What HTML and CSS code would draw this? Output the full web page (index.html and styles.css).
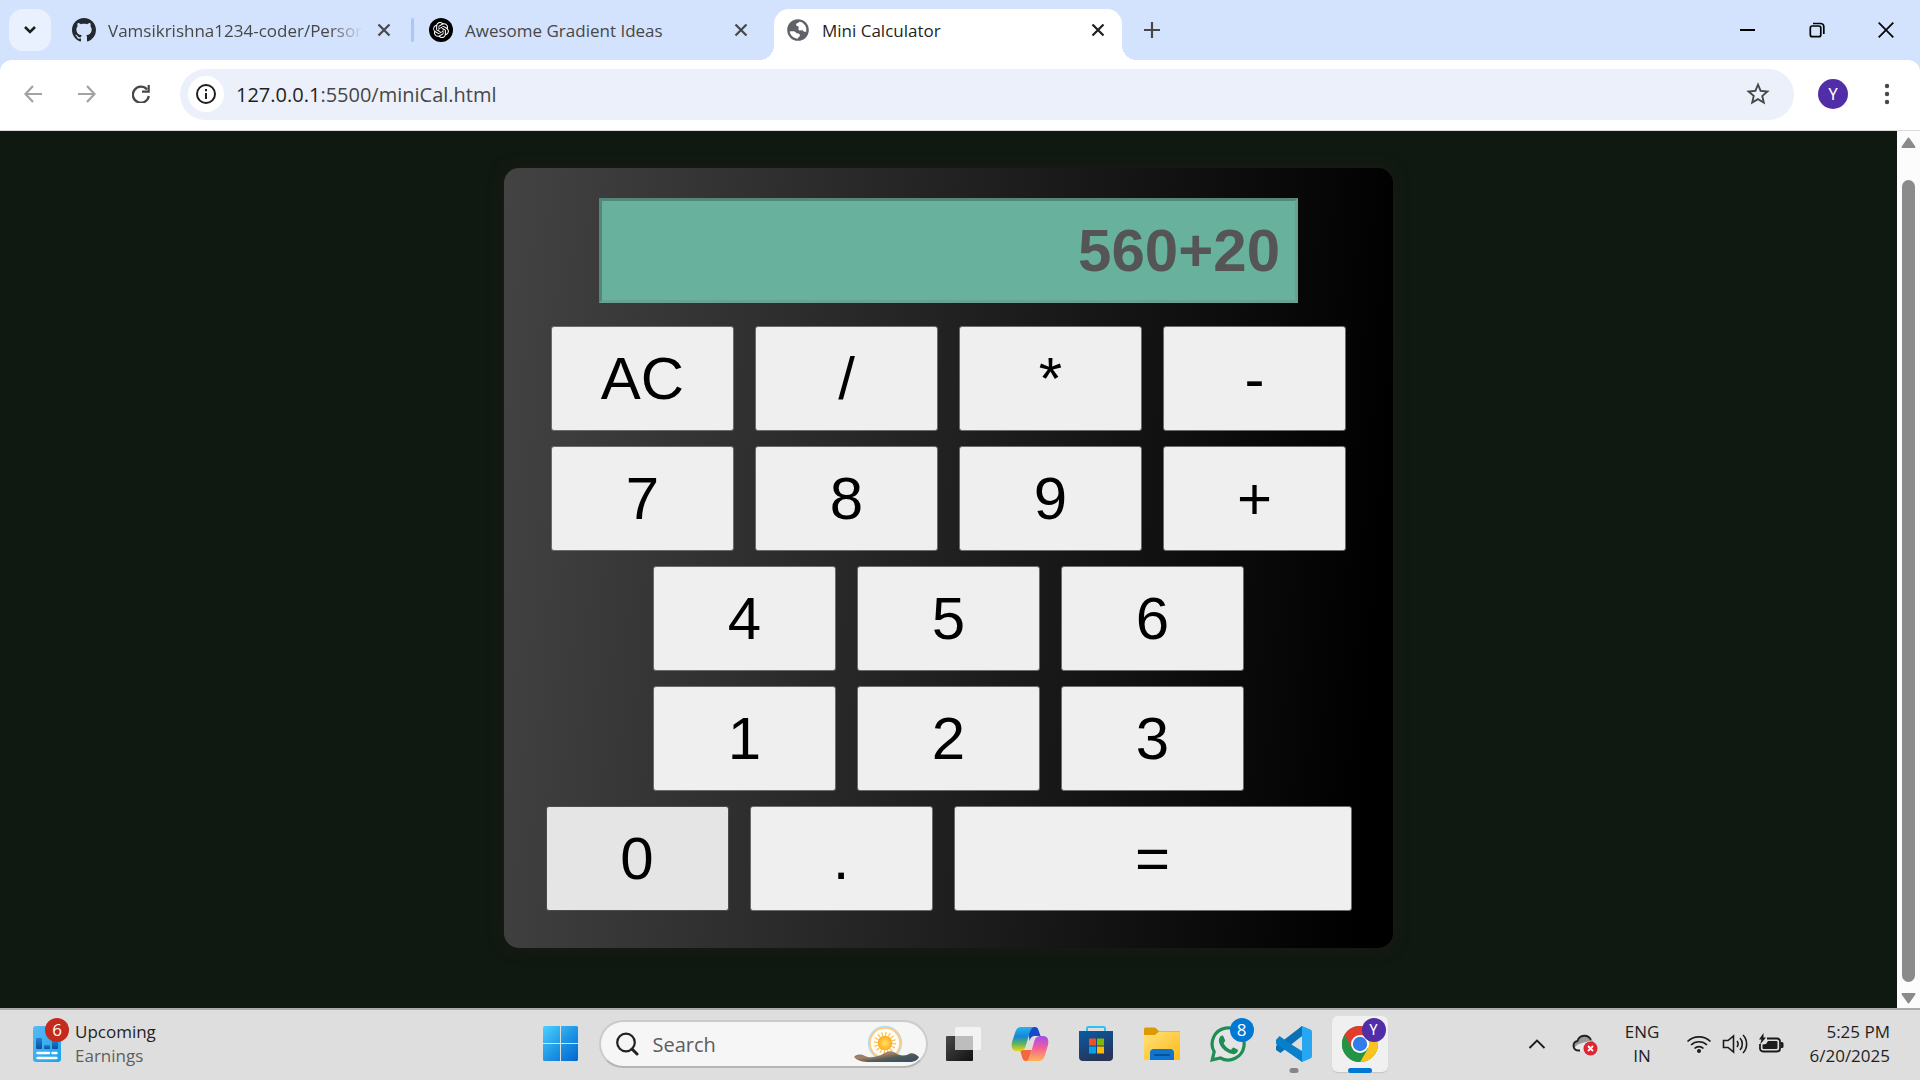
FILE: index.html
```html
<!DOCTYPE html>
<html lang="en">
<head>
<meta charset="utf-8">
<title>Mini Calculator</title>
<meta name="viewport" content="width=device-width, initial-scale=1">
<link rel="stylesheet" href="styles.css">
</head>
<body>
<header class="tab-strip">
  <button class="tab-search" aria-label="Search tabs"><svg width="18" height="18" viewBox="0 0 18 18"><path d="M4 6l5 5 5-5" fill="none" stroke="#1f1f1f" stroke-width="2.6"/></svg></button>
  <nav class="tabs" aria-label="Open tabs">
    <div class="tab">
      <svg class="favicon" viewBox="0 0 16 16"><path fill="#24292f" d="M8 0C3.58 0 0 3.58 0 8c0 3.54 2.29 6.53 5.47 7.59.4.07.55-.17.55-.38 0-.19-.01-.82-.01-1.49-2.01.37-2.53-.49-2.69-.94-.09-.23-.48-.94-.82-1.13-.28-.15-.68-.52-.01-.53.63-.01 1.08.58 1.23.82.72 1.21 1.87.87 2.33.66.07-.52.28-.87.51-1.07-1.78-.2-3.64-.89-3.64-3.95 0-.87.31-1.59.82-2.15-.08-.2-.36-1.02.08-2.12 0 0 .67-.21 2.2.82.64-.18 1.32-.27 2-.27s1.36.09 2 .27c1.53-1.04 2.2-.82 2.2-.82.44 1.1.16 1.92.08 2.12.51.56.82 1.27.82 2.15 0 3.07-1.87 3.75-3.65 3.95.29.25.54.73.54 1.48 0 1.07-.01 1.93-.01 2.2 0 .21.15.46.55.38A8.01 8.01 0 0 0 16 8c0-4.42-3.58-8-8-8z"/></svg>
      <a class="tab-title faded" href="#">Vamsikrishna1234-coder/Person</a>
      <button class="tab-close" aria-label="Close tab"><svg width="14" height="14" viewBox="0 0 14 14"><path d="M1.5 1.5l11 11m0-11l-11 11" stroke="currentColor" stroke-width="2.2"/></svg></button>
    </div>
    <span class="separator"></span>
    <div class="tab">
      <svg class="favicon" viewBox="0 0 24 24"><circle cx="12" cy="12" r="12"/><path transform="translate(4 4) scale(.667)" fill="#fff" d="M22.282 9.821a5.985 5.985 0 0 0-.516-4.91 6.046 6.046 0 0 0-6.51-2.9A6.065 6.065 0 0 0 4.981 4.18a5.985 5.985 0 0 0-3.998 2.9 6.046 6.046 0 0 0 .743 7.097 5.98 5.98 0 0 0 .51 4.911 6.051 6.051 0 0 0 6.515 2.9A5.985 5.985 0 0 0 13.26 24a6.056 6.056 0 0 0 5.772-4.206 5.99 5.99 0 0 0 3.997-2.9 6.056 6.056 0 0 0-.747-7.073zM13.26 22.43a4.476 4.476 0 0 1-2.876-1.04l.141-.081 4.779-2.758a.795.795 0 0 0 .392-.681v-6.737l2.02 1.168a.071.071 0 0 1 .038.052v5.583a4.504 4.504 0 0 1-4.494 4.494zM3.6 18.304a4.47 4.47 0 0 1-.535-3.014l.142.085 4.783 2.759a.771.771 0 0 0 .78 0l5.843-3.369v2.332a.08.08 0 0 1-.033.062L9.74 19.95a4.5 4.5 0 0 1-6.14-1.646zM2.34 7.896a4.485 4.485 0 0 1 2.366-1.973V11.6a.766.766 0 0 0 .388.676l5.815 3.355-2.02 1.168a.076.076 0 0 1-.071 0l-4.83-2.786A4.504 4.504 0 0 1 2.34 7.872zm16.597 3.855l-5.833-3.387L15.119 7.2a.076.076 0 0 1 .071 0l4.83 2.791a4.494 4.494 0 0 1-.676 8.105v-5.678a.79.79 0 0 0-.407-.667zm2.01-3.023l-.141-.085-4.774-2.782a.776.776 0 0 0-.785 0L9.409 9.23V6.897a.066.066 0 0 1 .028-.061l4.83-2.787a4.5 4.5 0 0 1 6.68 4.66zm-12.64 4.135l-2.02-1.164a.08.08 0 0 1-.038-.057V6.075a4.5 4.5 0 0 1 7.375-3.453l-.142.08L8.704 5.46a.795.795 0 0 0-.393.681zm1.097-2.365l2.602-1.5 2.607 1.5v2.999l-2.597 1.5-2.607-1.5z"/></svg>
      <a class="tab-title" href="#">Awesome Gradient Ideas</a>
      <button class="tab-close" aria-label="Close tab"><svg width="14" height="14" viewBox="0 0 14 14"><path d="M1.5 1.5l11 11m0-11l-11 11" stroke="currentColor" stroke-width="2.2"/></svg></button>
    </div>
    <span class="separator hidden"></span>
    <div class="tab active">
      <svg class="favicon" viewBox="0 0 24 24"><path fill="#5f6368" fill-rule="evenodd" d="M12 1.2a10.8 10.8 0 1 0 0 21.600 10.800 10.800 0 0 0 0-21.600zM3.700 13.500c3.200-.4 5.300-.2 6.500 1.300 1 1.300 3.800.3 3.800 2.600 0 1-1.900 1.300-2 3.200C7.600 20.500 4.300 17.500 3.700 13.500zM13.500 3.600c-.3 1.600-3.400 1.300-3.400 3.100 0 1.500 1.800.9 2.400 1.900.8 1.300-.7 2.400.2 3.300 1.300 1.300 3.500-.3 4.500 1 .7.900 1.800 1.100 3.100.8a8.500 8.500 0 0 0-6.800-10.100z"/></svg>
      <a class="tab-title" href="#" aria-current="page">Mini Calculator</a>
      <button class="tab-close" aria-label="Close tab"><svg width="14" height="14" viewBox="0 0 14 14"><path d="M1.500 1.500l11 11m0-11l-11 11" stroke="currentColor" stroke-width="2.2"/></svg></button>
    </div>
  </nav>
  <button class="new-tab" aria-label="New tab"><svg width="16" height="16" viewBox="0 0 16 16"><path d="M8 0v16M0 8h16" stroke="#474747" stroke-width="2.2"/></svg></button>
  <div class="window-controls">
    <button aria-label="Minimize"><svg width="16" height="16" viewBox="0 0 16 16"><path d="M0 8h15" stroke="#000" stroke-width="2"/></svg></button>
    <button aria-label="Restore"><svg width="16" height="16" viewBox="0 0 16 16" fill="none" stroke="#000" stroke-width="1.700"><rect x="1.300" y="4" width="10.500" height="10.700" rx="2"/><path d="M4 1.500h7.500a3.300 3.300 0 0 1 3.300 3.300V12"/></svg></button>
    <button aria-label="Close"><svg width="16" height="16" viewBox="0 0 16 16"><path d="M.7.700l14.600 14.600m0-14.600L.7 15.300" stroke="#000" stroke-width="1.700"/></svg></button>
  </div>
</header>

<div class="toolbar-back">
<div class="toolbar">
  <div class="nav-buttons">
    <button aria-label="Back"><svg width="18" height="18" viewBox="0 0 18 18"><path d="M18 9H1.500M9 1L1.500 9 9 17" fill="none" stroke="#a3a3a3" stroke-width="2.200"/></svg></button>
    <button aria-label="Forward"><svg width="18" height="18" viewBox="0 0 18 18"><path d="M0 9h16.500M9 1l7.500 8L9 17" fill="none" stroke="#a3a3a3" stroke-width="2.200"/></svg></button>
    <button aria-label="Reload"><svg width="18" height="18" viewBox="0 0 18 18"><path d="M15 4.500A8 8 0 1 0 16.800 11" fill="none" stroke="#474747" stroke-width="2.300"/><path d="M17.800 0v7.700H10V5.500h5.600V0z" fill="#474747"/></svg></button>
  </div>
  <div class="omnibox">
    <button class="site-info" aria-label="Site information"><svg width="20" height="20" viewBox="0 0 20 20"><circle cx="10" cy="10" r="9" fill="none" stroke="#1f1f1f" stroke-width="2"/><path d="M10 9v6M10 5v2.200" stroke="#1f1f1f" stroke-width="2"/></svg></button>
    <div class="url"><span class="host">127.0.0.1</span>:5500/miniCal.html</div>
    <button class="bookmark" aria-label="Bookmark this tab"><svg width="28" height="28" viewBox="0 0 24 24"><path fill="#474747" d="M22 9.240l-7.190-.62L12 2 9.190 8.630 2 9.240l5.460 4.730L5.820 21 12 17.270 18.180 21l-1.630-7.030L22 9.240zM12 15.400l-3.760 2.270 1-4.280-3.320-2.880 4.380-.38L12 6.100l1.710 4.040 4.380.38-3.320 2.880 1 4.280L12 15.400z"/></svg></button>
  </div>
  <button class="profile" aria-label="Profile">Y</button>
  <button class="menu" aria-label="Menu"><svg width="6" height="22" viewBox="0 0 6 22" fill="#474747"><circle cx="3" cy="3" r="2.200"/><circle cx="3" cy="11" r="2.200"/><circle cx="3" cy="19" r="2.200"/></svg></button>
</div>
</div>

<div class="viewport">
  <main class="page">
    <form class="calculator">
      <input class="display" type="text" value="560+20" aria-label="Result" readonly>
      <div class="keys">
        <div class="row"><button type="button">AC</button><button type="button">/</button><button type="button">*</button><button type="button">-</button></div>
        <div class="row"><button type="button">7</button><button type="button">8</button><button type="button">9</button><button type="button">+</button></div>
        <div class="row"><button type="button">4</button><button type="button">5</button><button type="button">6</button></div>
        <div class="row"><button type="button">1</button><button type="button">2</button><button type="button">3</button></div>
        <div class="row"><button type="button" class="hovered">0</button><button type="button">.</button><button type="button" class="equals">=</button></div>
      </div>
    </form>
  </main>
  <div class="scrollbar">
    <svg width="15" height="12" viewBox="0 0 15 12"><path d="M7.500 1.500L13.500 10H1.500z" fill="#8b8b8b" stroke="#8b8b8b" stroke-width="2" stroke-linejoin="round"/></svg>
    <div class="track"><div class="thumb"></div></div>
    <svg width="15" height="12" viewBox="0 0 15 12"><path d="M7.500 10.500L1.500 2h12z" fill="#8b8b8b" stroke="#8b8b8b" stroke-width="2" stroke-linejoin="round"/></svg>
  </div>
</div>

<footer class="taskbar">
  <button class="widget">
    <span class="widget-icon">
      <svg width="28" height="36" viewBox="0 0 28 36"><defs><linearGradient id="wd" x2="1" y2="1"><stop stop-color="#5db8f3"/><stop offset="1" stop-color="#18a3ec"/></linearGradient><linearGradient id="wb" x2="0" y2="1"><stop stop-color="#1f82d6"/><stop offset="1" stop-color="#0b4f9e"/></linearGradient></defs><rect width="28" height="36" rx="3" fill="url(#wd)"/><rect x="3" y="12" width="6" height="11" rx="1" fill="url(#wb)"/><rect x="11" y="19" width="6" height="4" rx="1" fill="url(#wb)"/><rect x="19" y="14" width="6" height="9" rx="1" fill="url(#wb)"/><path d="M4.500 27h11.500M19.500 27h4M4.500 32h19" stroke="#fff" stroke-width="2.400" stroke-linecap="round"/></svg>
      <span class="badge red">6</span>
    </span>
    <span class="widget-text"><span>Upcoming</span><span class="muted">Earnings</span></span>
  </button>

  <div class="apps">
    <button aria-label="Start"><svg width="36" height="36" viewBox="0 0 36 36"><defs><linearGradient id="win" x2="1" y2="1"><stop stop-color="#4cd0ff"/><stop offset=".5" stop-color="#2098e5"/><stop offset="1" stop-color="#0067d0"/></linearGradient></defs><path fill="url(#win)" d="M1.500 0H17v17H0V1.500A1.500 1.500 0 0 1 1.500 0zM18 0h15.500A1.500 1.500 0 0 1 35 1.500V17H18zM0 18h17v17H1.500A1.500 1.500 0 0 1 0 33.500zM18 18h17v15.500a1.500 1.500 0 0 1-1.500 1.500H18z"/></svg></button>
    <label class="search">
      <svg width="24" height="24" viewBox="0 0 24 24" fill="none" stroke="#222"><circle cx="11" cy="10.500" r="8.800" stroke-width="2.200"/><path d="M17 17l5 5" stroke-width="3" stroke-linecap="round"/></svg>
      <input type="text" placeholder="Search" aria-label="Search">
      <svg class="sun" width="66" height="40" viewBox="0 0 66 40"><defs><radialGradient id="sun"><stop stop-color="#ffe069"/><stop offset="1" stop-color="#ffac1c"/></radialGradient><linearGradient id="hill" x2="1" y2="1"><stop stop-color="#776b5e"/><stop offset=".35" stop-color="#a98266"/><stop offset=".6" stop-color="#515b58"/><stop offset="1" stop-color="#304a63"/></linearGradient></defs><circle cx="31" cy="19" r="16.500" fill="#fffdf6" stroke="#b7e1ef" stroke-width="1.500"/><circle cx="31" cy="19" r="15.200" fill="none" stroke="#ffc680" stroke-width="1.800"/><circle cx="31" cy="19" r="9" fill="none" stroke="#ffc04f" stroke-width="4" stroke-dasharray="1.200 2.330"/><circle cx="31" cy="19" r="7.300" fill="url(#sun)"/><path fill="url(#hill)" d="M0 33c3-3 7-3 11-1 6 3 11 0 16-1 5-3 9-5 13-3 4 3 8 4 13 3 4-3 8-2 12 2-1 3-5 5-10 5H16C9 38 3 37 0 33z"/></svg>
    </label>
    <button aria-label="Task view"><svg width="36" height="36" viewBox="0 0 36 36"><defs><linearGradient id="tv" x2="1" y2="1"><stop stop-color="#494949"/><stop offset="1" stop-color="#111"/></linearGradient></defs><rect y="10" width="27" height="25" rx="1" fill="url(#tv)"/><rect x="9" y="1" width="26" height="23" rx="1" fill="#f3f3f3"/><path d="M9 10h17a1 1 0 0 1 1 1v13H9z" fill="#bdbdbd"/></svg></button>
    <button aria-label="Copilot"><svg width="38" height="34" viewBox="0 0 38 34"><defs><linearGradient id="c1" x2="0" y2="1"><stop stop-color="#23b5ef"/><stop offset=".4" stop-color="#1586d8"/><stop offset=".7" stop-color="#5eb75a"/><stop offset="1" stop-color="#f1d21a"/></linearGradient><linearGradient id="c2" x2="0" y2="1"><stop stop-color="#a34bf0"/><stop offset=".45" stop-color="#f15c9c"/><stop offset="1" stop-color="#ffb453"/></linearGradient></defs><path d="M17 0h7c3 0 3.500 3 4.500 6l1 3h-5c-4 0-5 2-6 5z" fill="#1948c9"/><path d="M9 23h12l-4 11h-1c-4 0-4.500-2-5.500-6z" fill="#f5683c"/><path d="M10 0h13c-3 1-4 4-5 8l-3 10c-1 4-3 6-7 6H6c-5 0-6-4-5-9L4 6c1-4 3-6 6-6z" fill="url(#c1)"/><path d="M28 34H15c3-1 4-4 5-8l3-11c1-4 3-6 7-6h2c5 0 6 4 5 9l-3 10c-1 4-3 6-6 6z" fill="url(#c2)"/></svg></button>
    <button aria-label="Microsoft Store"><svg width="36" height="36" viewBox="0 0 36 36"><defs><linearGradient id="st" x2=".4" y2="1"><stop stop-color="#075ca6"/><stop offset="1" stop-color="#263558"/></linearGradient></defs><path d="M9 7V2.500A1.500 1.500 0 0 1 10.500 1h15A1.500 1.500 0 0 1 27 2.500V7" fill="none" stroke="#2fc1ef" stroke-width="2"/><path d="M1 5h34v26a4 4 0 0 1-4 4H5a4 4 0 0 1-4-4z" fill="url(#st)"/><path fill="#f25022" d="M11 12.500h7v7h-7z"/><path fill="#7fba00" d="M19 12.500h7v7h-7z"/><path fill="#00a4ef" d="M11 20.500h7v7h-7z"/><path fill="#ffb900" d="M19 20.500h7v7h-7z"/></svg></button>
    <button aria-label="File Explorer"><svg width="36" height="34" viewBox="0 0 36 34"><defs><linearGradient id="fo" x2="1" y2="1"><stop stop-color="#ffe07a"/><stop offset="1" stop-color="#fdbb19"/></linearGradient></defs><path d="M0 2a1.500 1.500 0 0 1 1.500-1.500H11l4 3.500h19.500A1.500 1.500 0 0 1 36 5.500V15H0z" fill="#dc9a05"/><path d="M0 8h11l4-3.500h19.500A1.500 1.500 0 0 1 36 6v25.500a1.500 1.500 0 0 1-1.500 1.500h-33A1.500 1.500 0 0 1 0 31.500z" fill="url(#fo)"/><path d="M6 33v-7a4 4 0 0 1 4-4h16a4 4 0 0 1 4 4v7z" fill="#0f74ce"/><path d="M11 28h14" stroke="#084f96" stroke-width="1.800" stroke-linecap="round"/></svg></button>
    <button aria-label="WhatsApp"><span class="app-icon"><svg width="36" height="36" viewBox="0 0 36 36"><path d="M2.200 33.800l2-8A16 16 0 1 1 10.500 32z" fill="#e4e4e4" stroke="#1f8e56" stroke-width="3.200"/><path d="M12 9.500c.7 0 1.100.1 1.500 1l1.700 4c.2.700-1.600 2.300-1.500 3 1.500 3 4 5 7 6.200.9.200 2-2.400 2.900-2.200l3.800 1.900c.6.300.6.700.5 1.400-.4 2.100-2.700 3.400-4.600 3.400-2 0-6.500-1.600-9.400-4.400-2.900-2.700-5-6.300-5-8.800 0-2.700 1.300-5.200 3.100-5.500z" fill="#1f8e56"/></svg><span class="badge blue">8</span></span></button>
    <button class="running" aria-label="Visual Studio Code"><svg width="36" height="36" viewBox="0 0 36 36"><path d="M26 0L9 16.500 3.500 12 0 14v3l26 19V25L13 17 26 10z" fill="#0a87d3"/><path d="M26 0v10L4.500 27 0 24v-4z" fill="#0971b4"/><path d="M0 14l3.500-4L27 27v9L0 18z" fill="#087fc9"/><path d="M26 0l8 3.200c1.400.6 2 1.500 2 2.800v24c0 1.300-.6 2.200-2 2.800L26 36z" fill="#27a7f1"/></svg></button>
    <button class="running focused" aria-label="Google Chrome"><span class="app-icon"><svg width="36" height="36" viewBox="0 0 36 36"><circle cx="18" cy="18" r="18" fill="#229342"/><path d="M18 18L2.400 9A18 18 0 0 1 33.600 9z" fill="#e33b2e"/><path d="M18 9h15.600A18 18 0 0 1 18 36l7.800-13.500z" fill="#fcc31e"/><path d="M2.400 9l7.800 13.500L18 9z" fill="#e33b2e"/><path d="M2.400 9A18 18 0 0 0 18 36l7.800-13.500H10.200z" fill="#249444"/><circle cx="18" cy="18" r="9" fill="#fff"/><circle cx="18" cy="18" r="7.200" fill="#347de8"/></svg><span class="badge purple">Y</span></span></button>
  </div>

  <div class="tray">
    <button aria-label="Show hidden icons"><svg width="18" height="12" viewBox="0 0 18 12"><path d="M1.500 10L9 2.500l7.500 7.500" fill="none" stroke="#1b1b1b" stroke-width="1.900"/></svg></button>
    <button class="cloud" aria-label="OneDrive"><svg width="26" height="24" viewBox="0 0 26 24"><path d="M5.500 18.500A4.700 4.700 0 0 1 5 9a7.500 7.500 0 0 1 14-1c4 1 5 7 2 9.500z" fill="#9a9a9a"/><path d="M2.500 16c3-5 9-5 15-7l4 3-3 7H6z" fill="#e8e8e8"/><path d="M8 18.500H6A4.800 4.800 0 0 1 5.500 9a7.200 7.200 0 0 1 13.500-1" fill="none" stroke="#202020" stroke-width="1.800"/><circle cx="18.500" cy="16.500" r="7" fill="#e02432"/><path d="M16 14l5 5m0-5l-5 5" stroke="#fff" stroke-width="1.900"/></svg></button>
    <button class="language"><span>ENG</span><span>IN</span></button>
    <button class="status" aria-label="Network, volume and battery">
      <svg width="26" height="20" viewBox="0 0 26 20" fill="none" stroke="#1b1b1b" stroke-width="1.700"><path d="M1.500 7.500a16.500 16.500 0 0 1 23 0M5 11a11.500 11.500 0 0 1 16 0M8.500 14.500a6.500 6.500 0 0 1 9 0"/><circle cx="13" cy="17" r="2" fill="#1b1b1b" stroke="none"/></svg>
      <svg width="26" height="22" viewBox="0 0 26 22" fill="none" stroke="#1b1b1b" stroke-width="1.600"><path d="M1.500 7.500H6L11.500 3v16L6 14.500H1.500zM15 8a5 5 0 0 1 0 6M18 5a9 9 0 0 1 0 12M21 2a13 13 0 0 1 0 18"/></svg>
      <svg width="26" height="22" viewBox="0 0 26 22"><path d="M9 5.500h10a3 3 0 0 1 3 3v7a3 3 0 0 1-3 3H5a3 3 0 0 1-3-3V11" fill="none" stroke="#1b1b1b" stroke-width="1.800"/><path d="M10 8h8.500a1 1 0 0 1 1 1v6a1 1 0 0 1-1 1h-13a1 1 0 0 1-1-1v-3.500L8 11z" fill="#1b1b1b"/><path d="M23 9h1a1.500 1.500 0 0 1 1.500 1.500v3A1.500 1.500 0 0 1 24 15h-1zM5.500 0L1 6.500h2.500L2 11.500l6-7H5.500z" fill="#1b1b1b"/></svg>
    </button>
    <button class="clock"><span>5:25 PM</span><span>6/20/2025</span></button>
  </div>
</footer>
</body>
</html>
```
FILE: styles.css
```css
* { box-sizing: border-box; }

body {
  margin: 0;
  height: 100vh;
  display: flex;
  flex-direction: column;
  overflow: hidden;
  font-family: "Open Sans", "Noto Sans", sans-serif;
  font-size: 17px;
  color: #1f1f1f;
}

button, input { font: inherit; color: inherit; }

button {
  display: flex;
  align-items: center;
  justify-content: center;
  padding: 0;
  border: 0;
  background: none;
}

a { color: inherit; text-decoration: none; }
svg { display: block; flex: none; }

/* Tab strip */
.tab-strip {
  display: flex;
  flex: none;
  height: 60px;
  padding: 9px 0 0 9px;
  background: #d3e3fd;
}

.tab-search {
  width: 42px;
  height: 42px;
  margin-right: 9px;
  border-radius: 14px;
  background: #e9f1fe;
}

.tabs { display: flex; }

.tab {
  position: relative;
  display: flex;
  align-items: center;
  width: 348px;
  height: 51px;
  padding: 0 12px 9px;
  color: #474747;
}

.favicon { width: 24px; height: 24px; }

.tab-title {
  flex: 1;
  margin: 1px 0 0 12px;
  white-space: nowrap;
}

.faded {
  -webkit-mask-image: linear-gradient(to right, #000 85%, transparent 98%);
  mask-image: linear-gradient(to right, #000 85%, transparent 98%);
}

.tab-close { width: 24px; height: 24px; margin-left: 4px; }

.separator {
  width: 3px;
  height: 24px;
  margin: 9px 3px;
  border-radius: 2px;
  background: #a8c7fa;
}

.separator.hidden { visibility: hidden; }

.active {
  border-radius: 15px 15px 0 0;
  background: #fff;
  color: #1f1f1f;
}

.active::before, .active::after {
  content: "";
  position: absolute;
  bottom: 0;
  width: 15px;
  height: 15px;
}

.active::before {
  right: 100%;
  background: radial-gradient(circle at 0 0, transparent 15px, #fff 15px);
}

.active::after {
  left: 100%;
  background: radial-gradient(circle at 100% 0, transparent 15px, #fff 15px);
}

.new-tab { width: 42px; height: 42px; margin-left: 9px; }

.window-controls { display: flex; height: 42px; margin-left: auto; }
.window-controls button { width: 69px; }

/* Toolbar */
.toolbar-back { flex: none; background: #d3e3fd; }

.toolbar {
  display: flex;
  align-items: center;
  height: 71px;
  padding: 0 12px 2px 6px;
  border-bottom: 1px solid #dcdcdc;
  border-radius: 12px 12px 0 0;
  background: #fff;
}

.nav-buttons { display: flex; margin-right: 12px; }
.nav-buttons button { width: 54px; height: 42px; }

.omnibox {
  display: flex;
  flex: 1;
  align-items: center;
  height: 51px;
  padding: 0 18px 0 8px;
  border-radius: 26px;
  background: #ebf0fa;
}

.site-info { width: 36px; height: 36px; border-radius: 50%; background: #fff; }
.url { flex: 1; margin-left: 12px; font-size: 20px; color: #474747; }
.host { color: #1f1f1f; }
.bookmark { width: 36px; height: 36px; }

.profile {
  width: 30px;
  height: 30px;
  margin-left: 24px;
  border-radius: 50%;
  background: #512da8;
  color: #fff;
  font-family: Roboto, sans-serif;
  font-size: 16px;
}

.menu { width: 42px; height: 42px; margin-left: 18px; }

/* Page */
.viewport { display: flex; flex: 1; min-height: 0; }

.page {
  flex: 1;
  padding-top: 37px;
  overflow: hidden;
  background: #101911;
}

.calculator {
  display: flex;
  flex-direction: column;
  align-items: center;
  gap: 23px;
  width: 889px;
  max-width: 100%;
  margin: 0 auto;
  padding: 30px 36px 37px;
  border-radius: 15px;
  background: linear-gradient(94deg, #434343, #000 96%);
  box-shadow: 0 0 15px #1b1b13;
}

.display {
  width: 699px;
  max-width: 100%;
  height: 105px;
  padding: 0 15px;
  border: 3px solid;
  border-color: #53877a #68a291 #68a291 #53877a;
  outline: 0;
  background: #68b29d;
  color: #555;
  font: bold 60px "Liberation Sans", Arial, sans-serif;
  text-align: right;
}

.keys { display: flex; flex-direction: column; gap: 15px; }
.row { display: flex; justify-content: center; gap: 21px; }

.row button {
  width: 183px;
  height: 105px;
  border: 1px solid #6b6b6b;
  border-radius: 3px;
  background: #efefef;
  color: #000;
  font: 60px "Liberation Sans", Arial, sans-serif;
}

.row .hovered { border-color: #4c4c4c; background: #e5e5e5; }
.row .equals { width: 398px; }

.row:last-child { margin: 0 -6px; }

.scrollbar {
  display: flex;
  flex-direction: column;
  align-items: center;
  width: 23px;
  padding: 6px 0 4px;
  background: #fcfcfc;
}

.track { flex: 1; padding: 31px 0 10px; }
.thumb { width: 13px; height: 100%; border-radius: 7px; background: #8b8b8b; }

/* Taskbar */
.taskbar {
  display: grid;
  grid-template-columns: 1fr auto 1fr;
  flex: none;
  height: 72px;
  padding-bottom: 2px;
  border-top: 2px solid #ababab;
  background: #dedede;
}

.widget { justify-self: start; gap: 14px; padding-left: 33px; text-align: left; line-height: 24px; }
.widget-icon, .app-icon { position: relative; }
.widget-text { display: flex; flex-direction: column; }
.muted { color: #5f5f5f; }

.badge {
  position: absolute;
  top: -8px;
  right: -8px;
  width: 24px;
  height: 24px;
  border-radius: 50%;
  color: #fff;
  font-size: 17px;
  line-height: 24px;
  text-align: center;
}

.red { background: #c42b1c; }
.blue { background: #0078d4; }
.purple { background: #512da8; font-family: Roboto, sans-serif; font-size: 14px; }

.apps { display: flex; align-items: center; }
.apps > button { position: relative; width: 66px; height: 56px; }

.search {
  display: flex;
  align-items: center;
  width: 329px;
  height: 48px;
  margin: 0 3px 0 5px;
  padding: 0 6px 0 14px;
  border: 2px solid #cbcbcb;
  border-bottom-color: #b5b5b5;
  border-radius: 24px;
  background: #f6f6f6;
}

.search input {
  flex: 1;
  min-width: 0;
  margin-left: 14px;
  padding: 0;
  border: 0;
  outline: 0;
  background: none;
  font-size: 20px;
}

.search input::placeholder { color: #5c5c5c; opacity: 1; }

.running::after {
  content: "";
  position: absolute;
  bottom: -1px;
  left: 50%;
  width: 9px;
  height: 5px;
  border-radius: 3px;
  background: #858585;
  transform: translateX(-50%);
}

.apps > .focused {
  width: 56px;
  margin: 0 5px;
  border-radius: 6px;
  background: #f0f0f0;
  box-shadow: 0 1px 1px #c4c4c4;
}

.focused::after { width: 24px; background: #0078d4; }

.tray { display: flex; justify-self: end; align-items: center; padding-right: 30px; line-height: 24px; }
.cloud { margin-left: 26px; }
.language { flex-direction: column; width: 36px; margin-left: 26px; }
.status { gap: 10px; margin-left: 26px; }
.clock { flex-direction: column; align-items: flex-end; width: 84px; margin-left: 22px; }
```
